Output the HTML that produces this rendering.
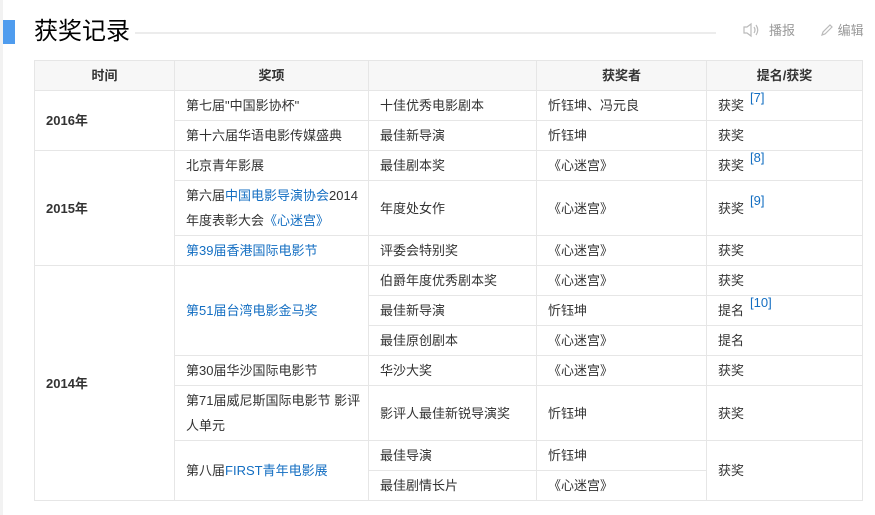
<!DOCTYPE html>
<html><head><meta charset="utf-8"><style>
body{margin:0;width:875px;height:515px;background:#fff;font-family:"Liberation Sans","Noto Sans CJK SC",sans-serif;position:relative;overflow:hidden;color:#333}
.strip{position:absolute;left:0;top:0;width:3px;height:515px;background:#f2f2f2}
.bar{position:absolute;left:3px;top:20px;width:12px;height:24px;background:#4f9cee}
.title{position:absolute;left:34px;top:16px;font-size:24px;line-height:32px;color:#000;font-weight:normal}
.line{position:absolute;left:135px;top:32px;width:581px;height:2px;background:#ececec}
.tools{position:absolute;top:22px;font-size:13px;color:#999;line-height:18px}
table{position:absolute;left:34px;top:60px;border-collapse:collapse;table-layout:fixed;font-size:13px}
td,th{border:1px solid #e6e6e6;padding:0 0 0 11px;height:29px;line-height:25px;vertical-align:middle;text-align:left;font-weight:normal}
th{background:#f7f7f7;font-weight:bold;text-align:center;padding:0}
td.y{font-weight:bold}
a{color:#136ec2;text-decoration:none}
sup{color:#136ec2;font-size:13px;vertical-align:8px;line-height:0;margin-left:6px}
</style></head><body>
<div class="strip"></div><div class="bar"></div>
<div class="title">获奖记录</div><div class="line"></div>
<div class="tools" style="left:742px"><svg width="18" height="16" viewBox="0 0 18 16" style="vertical-align:-3px"><path d="M2 5h3l4-3v12l-4-3H2z" fill="none" stroke="#bbb" stroke-width="1.2"/><path d="M12 5q2 3 0 6M14 3q3.5 5 0 10" fill="none" stroke="#bbb" stroke-width="1.2"/></svg><span style="margin-left:9px">播报</span></div>
<div class="tools" style="left:820px"><svg width="14" height="14" viewBox="0 0 14 14" style="vertical-align:-2px"><path d="M2 12l1-3 7-7 2 2-7 7z" fill="none" stroke="#bbb" stroke-width="1.2"/></svg> 编辑</div>
<table>
<colgroup><col style="width:140px"><col style="width:194px"><col style="width:168px"><col style="width:170px"><col style="width:156px"></colgroup>
<tr><th>时间</th><th>奖项</th><th></th><th>获奖者</th><th>提名/获奖</th></tr>
<tr><td class="y" rowspan="2">2016年</td><td>第七届"中国影协杯"</td><td>十佳优秀电影剧本</td><td>忻钰坤、冯元良</td><td>获奖<sup>[7]</sup></td></tr>
<tr><td>第十六届华语电影传媒盛典</td><td>最佳新导演</td><td>忻钰坤</td><td>获奖</td></tr>
<tr><td class="y" rowspan="3">2015年</td><td>北京青年影展</td><td>最佳剧本奖</td><td>《心迷宫》</td><td>获奖<sup>[8]</sup></td></tr>
<tr><td style="height:54px">第六届<a>中国电影导演协会</a>2014年度表彰大会<a>《心迷宫》</a></td><td>年度处女作</td><td>《心迷宫》</td><td>获奖<sup>[9]</sup></td></tr>
<tr><td><a>第39届香港国际电影节</a></td><td>评委会特别奖</td><td>《心迷宫》</td><td>获奖</td></tr>
<tr><td class="y" rowspan="8">2014年</td><td rowspan="3"><a>第51届台湾电影金马奖</a></td><td>伯爵年度优秀剧本奖</td><td>《心迷宫》</td><td>获奖</td></tr>
<tr><td>最佳新导演</td><td>忻钰坤</td><td>提名<sup>[10]</sup></td></tr>
<tr><td>最佳原创剧本</td><td>《心迷宫》</td><td>提名</td></tr>
<tr><td>第30届华沙国际电影节</td><td>华沙大奖</td><td>《心迷宫》</td><td>获奖</td></tr>
<tr><td style="height:54px">第71届威尼斯国际电影节 影评人单元</td><td>影评人最佳新锐导演奖</td><td>忻钰坤</td><td>获奖</td></tr>
<tr><td rowspan="2">第八届<a>FIRST青年电影展</a></td><td>最佳导演</td><td>忻钰坤</td><td rowspan="2">获奖</td></tr>
<tr><td>最佳剧情长片</td><td>《心迷宫》</td></tr>
</table>
</body></html>
